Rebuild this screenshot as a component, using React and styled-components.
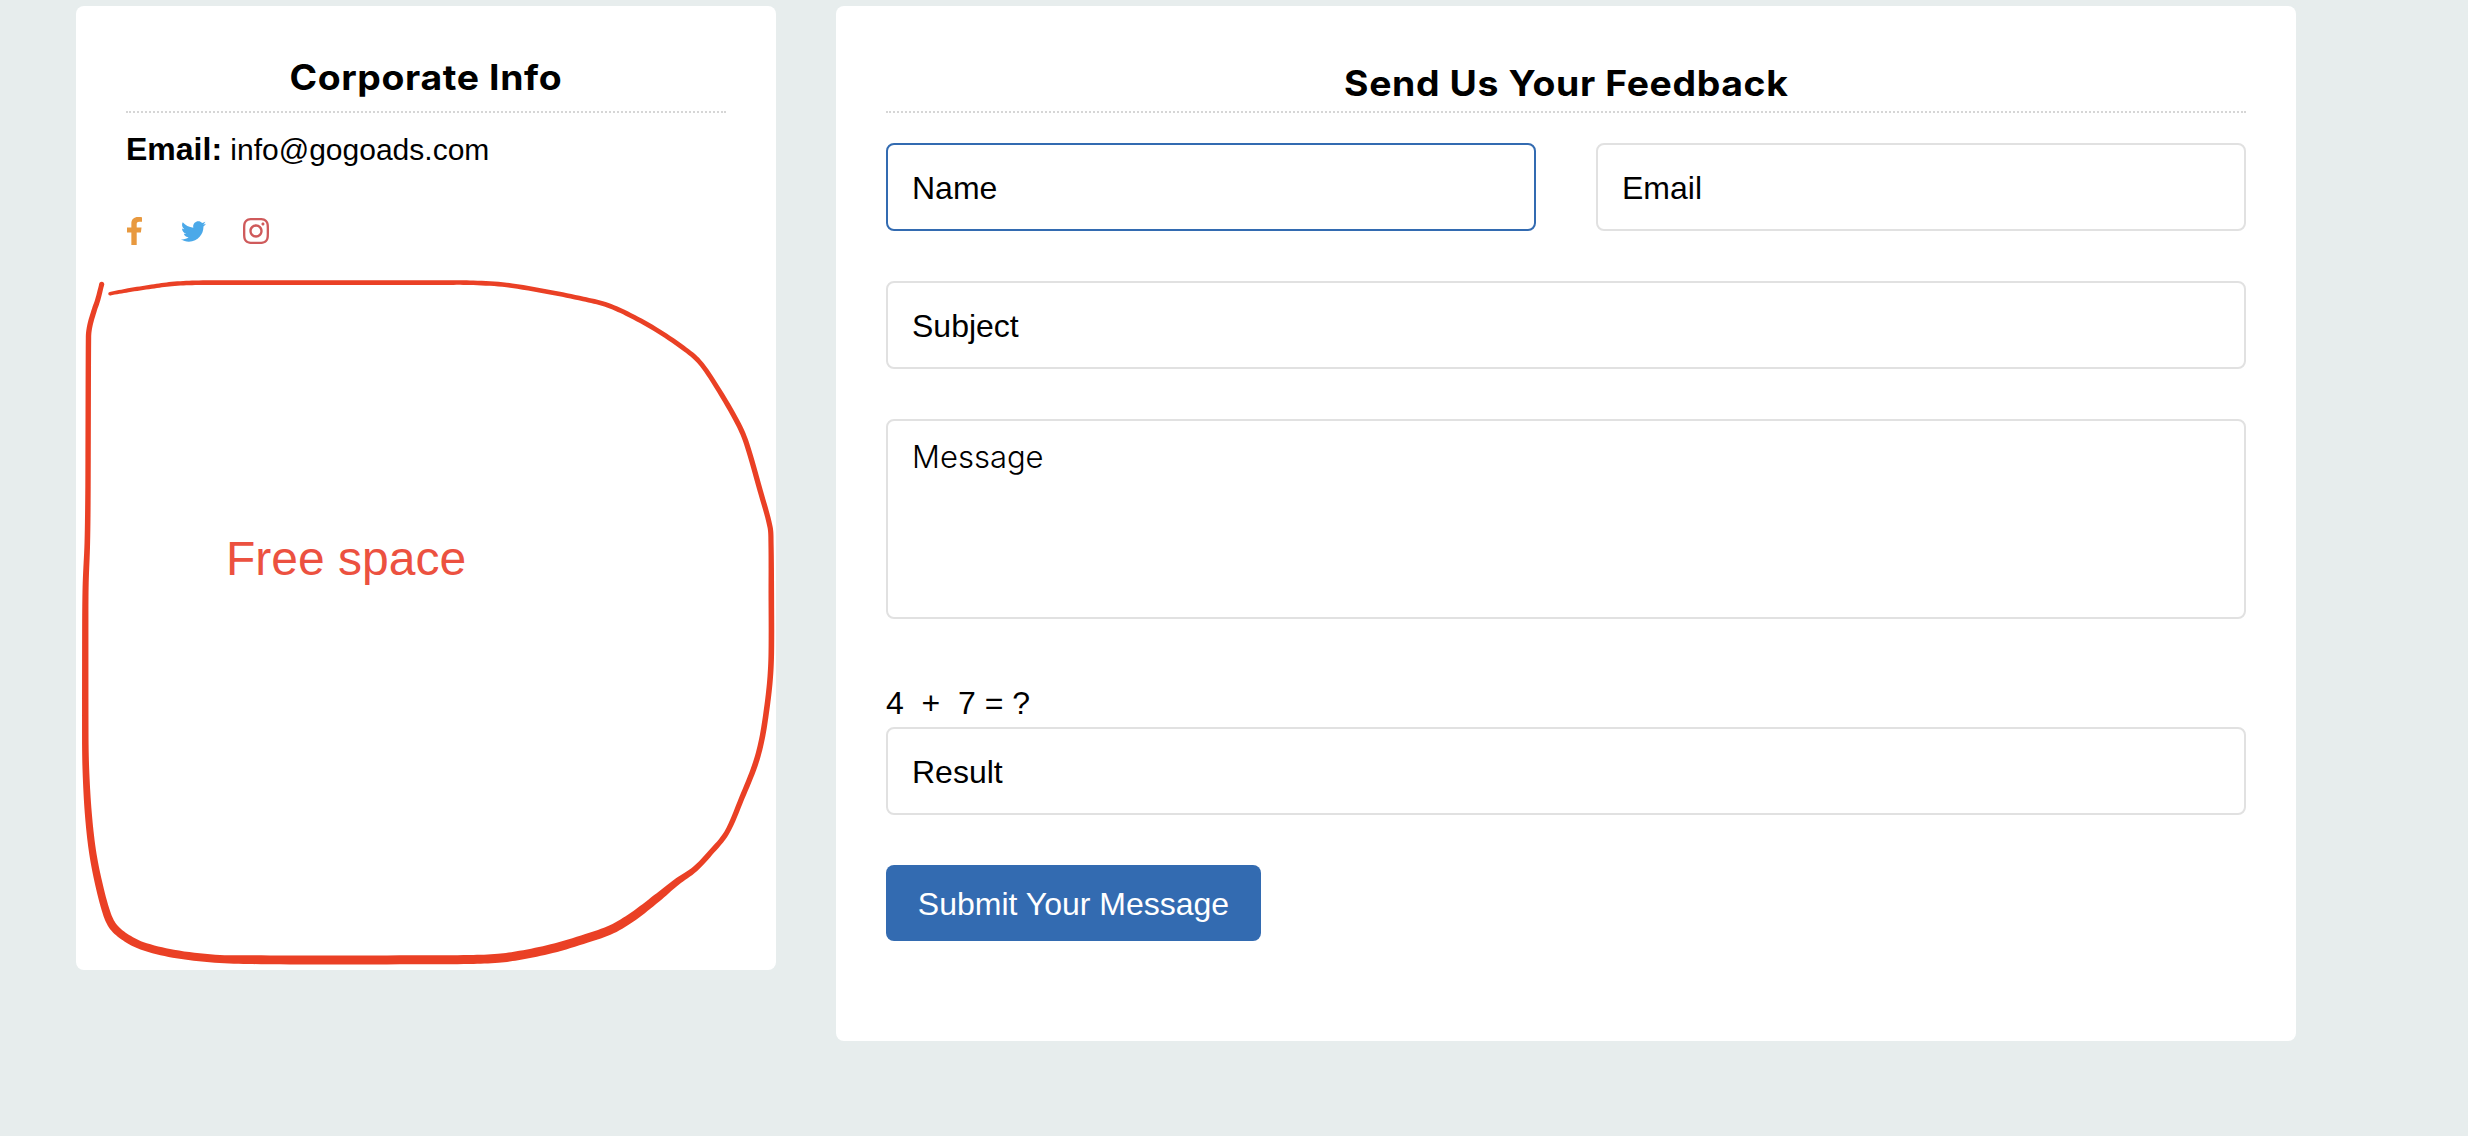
import React from 'react';
import styled, { createGlobalStyle } from 'styled-components';
import { FaTwitter, FaInstagram } from 'react-icons/fa';

const GlobalStyle = createGlobalStyle`
  *, *::before, *::after { box-sizing: border-box; }
  html, body { margin: 0; background: #e7eded; }
  body {
    color: #000;
    font-family: "Liberation Sans", Arial, sans-serif;
    font-size: 32px;
    line-height: 36px;
  }
  h2, p { margin: 0; }
`;

const Page = styled.main`
  display: flex;
  align-items: flex-start;
  gap: 60px;
  width: 2468px;
  height: 1136px;
  padding: 6px 0 0 76px;
  background: #e7eded;
  overflow: hidden;
`;

const Card = styled.section`
  position: relative;
  flex: none;
  width: ${(p) => p.$width}px;
  height: ${(p) => p.$height}px;
  padding: 0 50px;
  border-radius: 8px;
  background: #fff;
`;

const Title = styled.h2`
  height: 107px;
  padding-top: ${(p) => p.$top}px;
  border-bottom: 2px dotted #d6d6d6;
  font: 700 35px/44px Inter, "Liberation Sans", sans-serif;
  letter-spacing: 0.6px;
  text-align: center;
  white-space: nowrap;
`;

const WideText = styled.span`
  display: inline-block;
  transform: scaleX(1.067);
`;

const EmailLine = styled.p`
  margin-top: 18px;
  font-size: 30px;
  line-height: 36px;
  white-space: nowrap;

  strong {
    font-size: 32px;
  }
`;

const Socials = styled.div`
  display: flex;
  align-items: center;
  height: 30px;
  margin-top: 48px;
  padding-left: 1px;
`;

const SocialLink = styled.a`
  display: flex;
  margin-right: ${(p) => p.$gap || 0}px;
  color: ${(p) => p.$color};

  svg {
    display: block;
    width: ${(p) => p.$w}px;
    height: ${(p) => p.$h}px;
  }
`;

const Sketch = styled.svg`
  position: absolute;
  top: 0;
  left: 0;
  width: 700px;
  height: 964px;
  pointer-events: none;
`;

const Note = styled.span`
  position: absolute;
  top: 525px;
  left: 150px;
  color: #ec5140;
  font-size: 48px;
  line-height: 56px;
  white-space: nowrap;
`;

const Form = styled.form`
  display: flex;
  flex-direction: column;
  gap: 50px;
  margin-top: 30px;
`;

const Row = styled.div`
  display: grid;
  grid-template-columns: 1fr 1fr;
  gap: 60px;
`;

const Field = styled.label`
  display: block;
  height: 88px;
  padding: 25px 24px 0;
  border: 2px solid ${(p) => (p.$active ? '#336bb1' : '#e1e1e1')};
  border-radius: 8px;
  background: #fff;
`;

const MessageField = styled(Field)`
  height: 200px;
  padding-top: 18px;
  font-family: Inter, "Liberation Sans", sans-serif;
  font-size: 31px;
  font-weight: 300;
`;

const Captcha = styled.div`
  display: flex;
  flex-direction: column;
  gap: 4px;
  margin-top: 16px;
`;

const Question = styled.p`
  height: 38px;
  white-space: pre;
`;

const Submit = styled.button`
  align-self: flex-start;
  width: 375px;
  height: 76px;
  padding: 1px 0 0;
  border: 0;
  border-radius: 8px;
  background: #336bb1;
  color: #fff;
  font: inherit;
  white-space: nowrap;
`;

/* Pen samples of the hand-drawn loop: x, y, stroke width. */
const PEN = [
  [110, 293.7, 3.5], [128.3, 290.3, 4], [151.7, 286.7, 4.2], [171.7, 284, 4.4], [195, 282.8, 4.6],
  [226.7, 282.6, 4.6], [446.7, 282.6, 4.6], [473.3, 282.8, 4.6], [506.7, 285, 4.6], [550, 292.2, 4.6],
  [583.3, 299, 4.6], [605, 304.3, 4.8], [626.7, 313.5, 4.8], [655, 329, 4.8], [683.3, 348, 4.8],
  [699.3, 361.7, 4.8], [716.7, 386.7, 5], [738.3, 424, 5.2], [746.7, 444, 5.3], [760, 490, 5.3],
  [770, 526.7, 5.2], [771, 543, 5.2], [771.3, 593, 5.6], [771.3, 653, 5.6], [770, 680, 5.6],
  [766.7, 709, 5.6], [761.7, 740, 5.6], [755, 765, 5.6], [741.7, 798.3, 5.4], [726.7, 832.7, 5.2],
  [710, 853.3, 5.4], [695, 869, 5.8], [676.7, 882, 6.8], [656.7, 898.3, 8.2], [633.3, 916.3, 8.8],
  [611.7, 929.3, 9], [586.7, 938.3, 9], [551.7, 948.7, 9], [520, 955.3, 9], [498.3, 958.3, 9],
  [470, 959.5, 9], [420, 959.8, 9], [326.7, 960, 9], [253, 959.7, 8.8], [215, 958.7, 8],
  [173.3, 953.7, 8], [141.7, 945.7, 8], [125, 937, 8], [113.3, 926.7, 8], [106.7, 913.3, 7.8],
  [98.3, 881.7, 7.5], [92.3, 850, 7.2], [88.3, 813.3, 7], [86, 773.3, 6.7], [85.3, 740, 6.5],
  [85.3, 620, 6.3], [85.7, 583, 6], [87.3, 543, 5.6], [88, 486.7, 5.4], [88.5, 336.7, 5.4],
  [90, 325, 5.4], [94.3, 310, 5.3], [97.7, 300, 5.2], [101.7, 284.3, 5],
];

const at = (i) => PEN[Math.max(0, Math.min(PEN.length - 1, i))];

/* Smooth the samples with a cubic; the longer neighbour dominates each tangent so straights stay straight. */
function smooth() {
  const tangent = (i) => {
    const a = at(i - 1), b = at(i), c = at(i + 1);
    const d0 = Math.hypot(b[0] - a[0], b[1] - a[1]);
    const d1 = Math.hypot(c[0] - b[0], c[1] - b[1]);
    return [0, 1].map((k) => (c[k] - a[k]) / (d0 + d1));
  };
  const out = [];
  for (let i = 0; i < PEN.length - 1; i += 1) {
    const p = PEN[i], q = PEN[i + 1];
    const len = Math.hypot(q[0] - p[0], q[1] - p[1]);
    const reach = Math.min(len, 60);
    const m = tangent(i), n = tangent(i + 1);
    for (let s = 0; s < 8; s += 1) {
      const t = s / 8, t2 = t * t, t3 = t2 * t;
      const mix = (k) =>
        (2 * t3 - 3 * t2 + 1) * p[k] + (t3 - 2 * t2 + t) * reach * m[k] +
        (3 * t2 - 2 * t3) * q[k] + (t3 - t2) * reach * n[k];
      out.push([mix(0), mix(1), p[2] + (q[2] - p[2]) * t]);
    }
  }
  out.push(PEN[PEN.length - 1]);
  return out;
}

const LINE = smooth();
const START = LINE[0];
const END = LINE[LINE.length - 1];

function outline() {
  const left = [], right = [];
  LINE.forEach(([x, y, w], i) => {
    const a = LINE[Math.max(0, i - 1)];
    const b = LINE[Math.min(LINE.length - 1, i + 1)];
    const d = Math.hypot(b[0] - a[0], b[1] - a[1]) || 1;
    const nx = (-(b[1] - a[1]) / d) * (w / 2);
    const ny = ((b[0] - a[0]) / d) * (w / 2);
    left.push(`${(x + nx).toFixed(2)} ${(y + ny).toFixed(2)}`);
    right.unshift(`${(x - nx).toFixed(2)} ${(y - ny).toFixed(2)}`);
  });
  return `M${left.concat(right).join('L')}Z`;
}

function FreeSpaceLoop() {
  return (
    <Sketch viewBox="76 6 700 964" fill="#ea4025" aria-hidden="true">
      <path d={outline()} />
      <circle cx={START[0]} cy={START[1]} r={START[2] / 2} />
      <circle cx={END[0]} cy={END[1]} r={END[2] / 2} />
    </Sketch>
  );
}

function FacebookF() {
  return (
    <svg viewBox="0 0 264 512" fill="currentColor" preserveAspectRatio="none">
      <path d="M76.7 512V283H0v-91h76.7v-71.7C76.7 42.4 124.3 0 193.8 0c33.3 0 61.9 2.5 70.2 3.6V85h-48.2c-37.8 0-45.1 18-45.1 44.3V192H256l-11.7 91h-73.6v229" />
    </svg>
  );
}

export default function App() {
  return (
    <>
      <GlobalStyle />
      <Page>
        <Card $width={700} $height={964}>
          <Title $top={49}><WideText>Corporate Info</WideText></Title>
          <EmailLine><strong>Email:</strong> info@gogoads.com</EmailLine>
          <Socials>
            <SocialLink $color="#e8993f" $w={15} $h={28} $gap={39}><FacebookF /></SocialLink>
            <SocialLink $color="#4ba9e9" $w={25} $h={25} $gap={37}><FaTwitter /></SocialLink>
            <SocialLink $color="#cf5a5b" $w={26} $h={30}><FaInstagram /></SocialLink>
          </Socials>
          <FreeSpaceLoop />
          <Note>Free space</Note>
        </Card>
        <Card $width={1460} $height={1035}>
          <Title $top={55}><WideText>Send Us Your Feedback</WideText></Title>
          <Form>
            <Row>
              <Field $active>Name</Field>
              <Field>Email</Field>
            </Row>
            <Field>Subject</Field>
            <MessageField>Message</MessageField>
            <Captcha>
              <Question>{'4  +  7 = ?'}</Question>
              <Field>Result</Field>
            </Captcha>
            <Submit type="button">Submit Your Message</Submit>
          </Form>
        </Card>
      </Page>
    </>
  );
}
